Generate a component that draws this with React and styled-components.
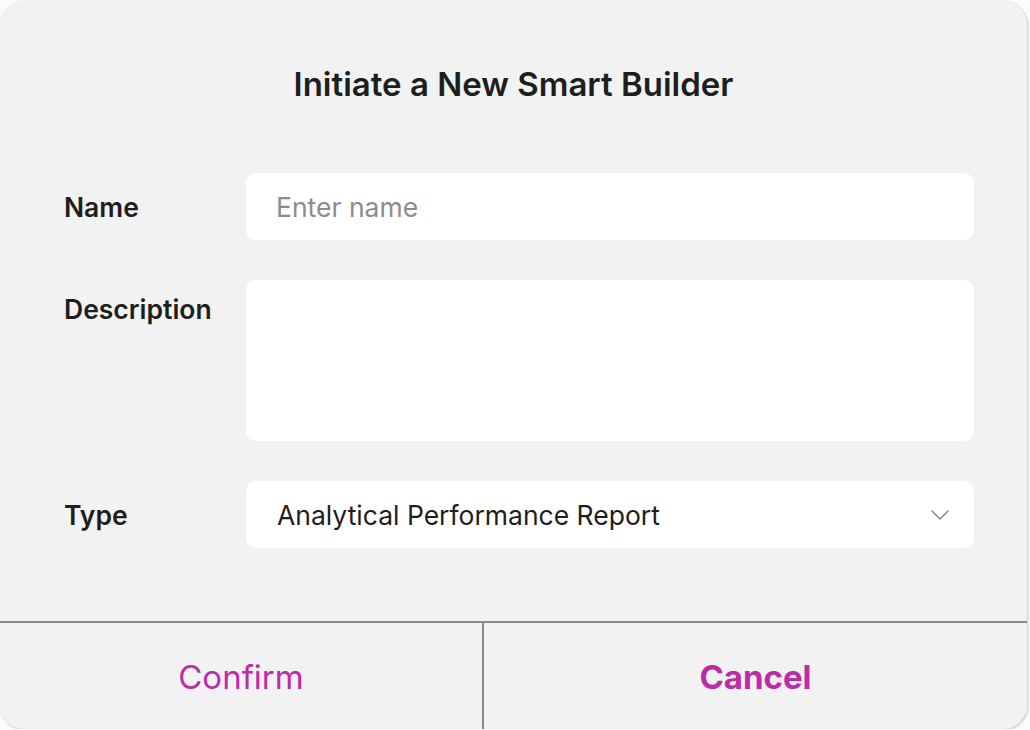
import styled, { createGlobalStyle } from 'styled-components';

const GlobalStyle = createGlobalStyle`
  * {
    box-sizing: border-box;
  }
  body {
    margin: 0;
    background: #fbfbfb;
    font-family: Inter, "Noto Sans", sans-serif;
  }
`;

function App() {
  return (
    <>
      <GlobalStyle />
      <Dialog>
        <Title>Initiate a New Smart Builder</Title>
        <Form>
          <Label>Name</Label>
          <Input placeholder="Enter name" />
          <Label $top>Description</Label>
          <TextArea />
          <Label>Type</Label>
          <Select>
            <span>Analytical Performance Report</span>
            <svg width="18" height="10" viewBox="0 0 18 10" fill="none">
              <polyline
                points="1,1 9,9 17,1"
                stroke="#8a8a8a"
                strokeWidth="1.6"
                strokeLinecap="round"
                strokeLinejoin="round"
              />
            </svg>
          </Select>
        </Form>
        <Footer>
          <FooterButton>Confirm</FooterButton>
          <FooterButton $bold>Cancel</FooterButton>
        </Footer>
      </Dialog>
    </>
  );
}

const Dialog = styled.div`
  width: 1027px;
  height: 728px;
  margin-top: 1px;
  background: #f2f2f2;
  border-radius: 24px;
  box-shadow: 1px 1px 3px rgba(0, 0, 0, 0.22);
  display: flex;
  flex-direction: column;
  overflow: hidden;
`;

const Title = styled.h1`
  margin: 0;
  padding-top: 63px;
  text-align: center;
  font-size: 33px;
  line-height: 40px;
  font-weight: 600;
  color: #1e1e1e;
`;

const Form = styled.div`
  display: grid;
  grid-template-columns: 182px 728px;
  row-gap: 40px;
  align-items: center;
  padding: 69px 0 0 64px;
  flex: 1;
  align-content: start;
`;

const Label = styled.div`
  font-size: 26.5px;
  line-height: 32px;
  font-weight: 600;
  color: #1e1e1e;
  align-self: ${(p) => (p.$top ? 'start' : 'center')};
  padding-top: ${(p) => (p.$top ? '13px' : '0')};
`;

const fieldBase = `
  width: 100%;
  border: none;
  outline: none;
  background: #fff;
  border-radius: 10px;
  font-family: Inter, "Noto Sans", sans-serif;
  font-size: 26.5px;
  color: #1e1e1e;
`;

const Input = styled.input`
  ${fieldBase}
  height: 67px;
  padding: 0 30px;

  &::placeholder {
    color: #8c8c8c;
  }
`;

const TextArea = styled.textarea`
  ${fieldBase}
  height: 161px;
  padding: 18px 30px;
  resize: none;
`;

const Select = styled.div`
  ${fieldBase}
  height: 67px;
  padding: 0 25px 0 31px;
  display: flex;
  align-items: center;
  justify-content: space-between;
`;

const Footer = styled.div`
  display: grid;
  grid-template-columns: 482px 1fr;
  border-top: 2px solid #8a8a8a;
  height: 108px;
`;

const FooterButton = styled.button`
  border: none;
  background: transparent;
  font-family: Inter, "Noto Sans", sans-serif;
  font-size: 33px;
  font-weight: ${(p) => (p.$bold ? 700 : 400)};
  color: #bd2ba8;
  padding-top: 2px;

  & + & {
    border-left: 2px solid #8a8a8a;
  }
`;

export default App;
